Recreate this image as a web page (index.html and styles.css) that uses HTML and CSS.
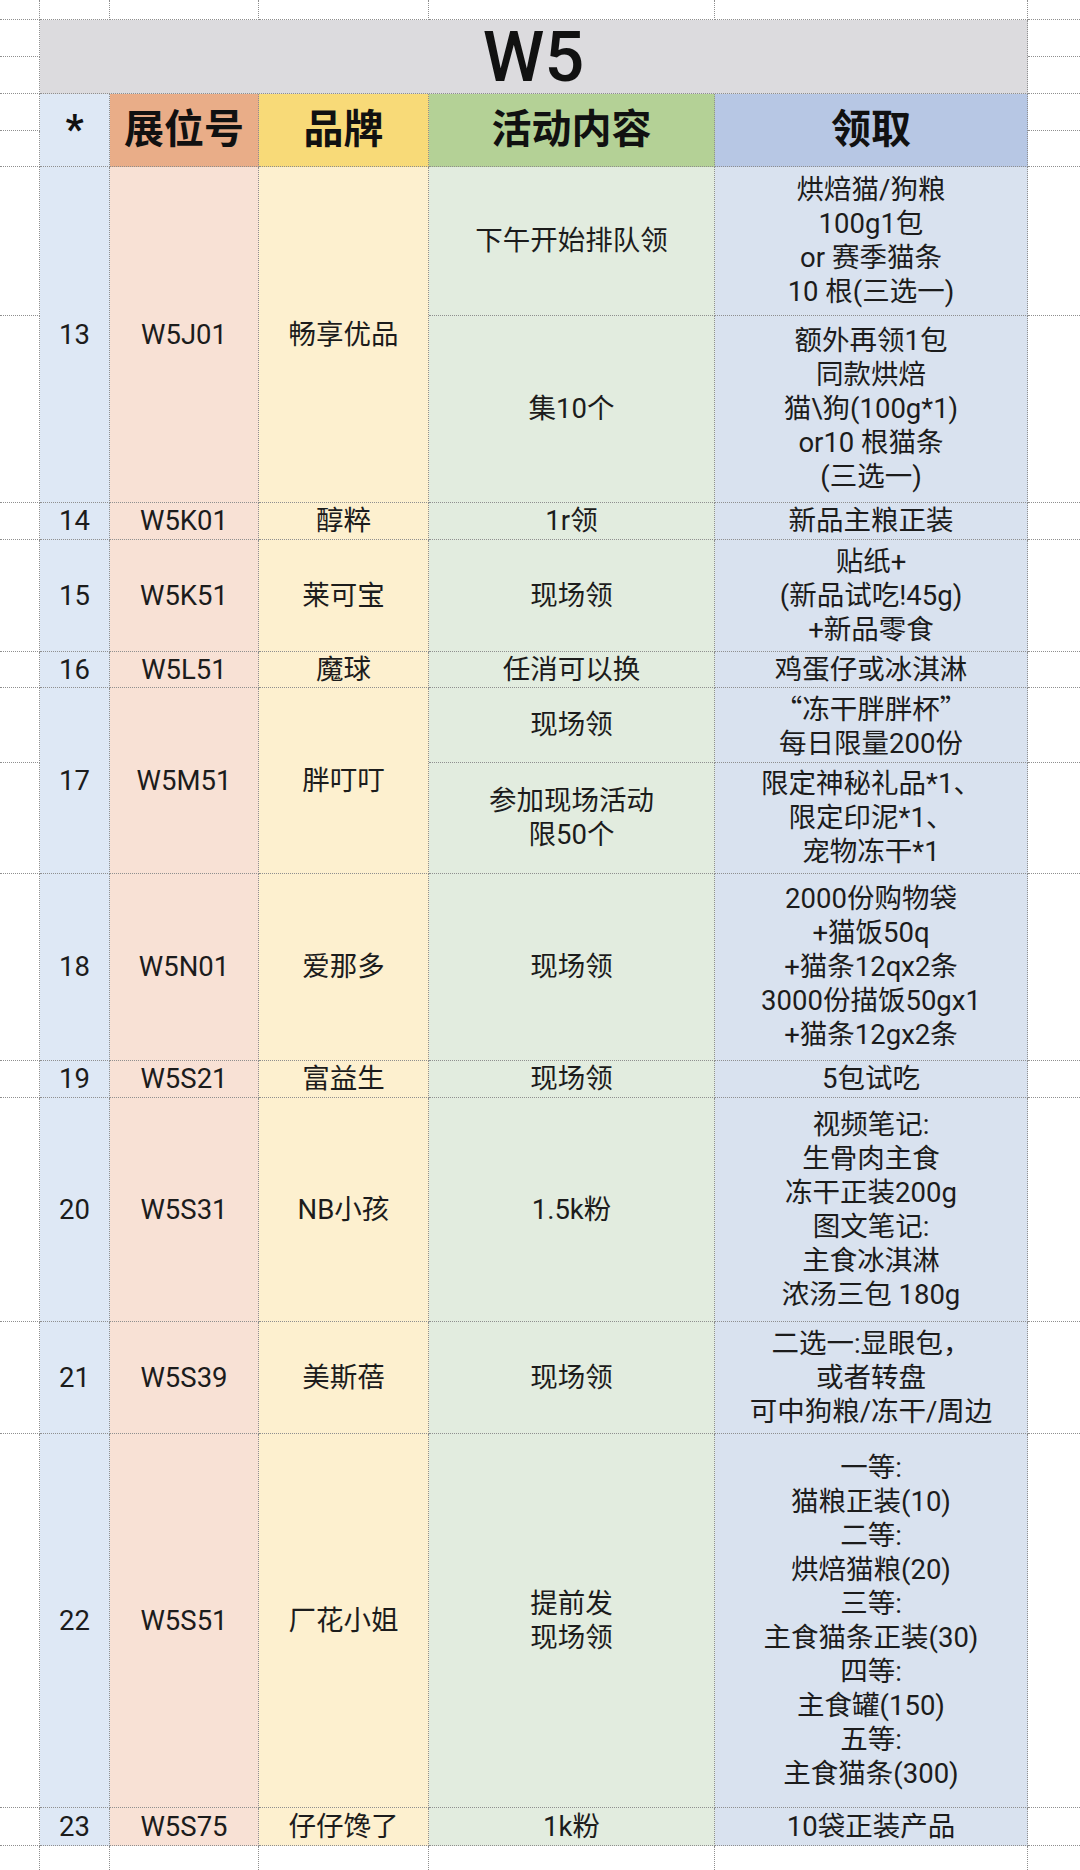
FILE: index.html
```html
<!DOCTYPE html>
<html lang="zh-CN">
<head>
<meta charset="utf-8">
<title>W5</title>
<link rel="stylesheet" href="styles.css">
</head>
<body>
<div class="sheet">
  <!-- top blank row -->
  <div class="c m"></div><div class="c"></div><div class="c"></div><div class="c"></div><div class="c"></div><div class="c"></div><div class="c m rt"></div>

  <!-- title -->
  <div class="c m"></div>
  <div class="c title s2">W5</div>
  <div class="c m rt"></div>
  <div class="c m"></div>
  <div class="c m rt"></div>

  <!-- header -->
  <div class="c m"></div>
  <div class="c h n s2">*</div>
  <div class="c h hb s2">展位号</div>
  <div class="c h hbr s2">品牌</div>
  <div class="c h ha s2">活动内容</div>
  <div class="c h hr s2">领取</div>
  <div class="c m rt"></div>
  <div class="c m"></div>
  <div class="c m rt"></div>

  <!-- 13 -->
  <div class="c m"></div>
  <div class="c n s2">13</div>
  <div class="c b s2">W5J01</div>
  <div class="c br s2">畅享优品</div>
  <div class="c a">下午开始排队领</div>
  <div class="c r">烘焙猫/狗粮<br>100g1包<br>or 赛季猫条<br>10 根(三选一)</div>
  <div class="c m rt"></div>
  <div class="c m"></div>
  <div class="c a">集10个</div>
  <div class="c r">额外再领1包<br>同款烘焙<br>猫\狗(100g*1)<br>or10 根猫条<br>(三选一)</div>
  <div class="c m rt"></div>

  <!-- 14 -->
  <div class="c m"></div>
  <div class="c n">14</div>
  <div class="c b">W5K01</div>
  <div class="c br">醇粹</div>
  <div class="c a">1r领</div>
  <div class="c r">新品主粮正装</div>
  <div class="c m rt"></div>

  <!-- 15 -->
  <div class="c m"></div>
  <div class="c n">15</div>
  <div class="c b">W5K51</div>
  <div class="c br">莱可宝</div>
  <div class="c a">现场领</div>
  <div class="c r">贴纸+<br>(新品试吃!45g)<br>+新品零食</div>
  <div class="c m rt"></div>

  <!-- 16 -->
  <div class="c m"></div>
  <div class="c n">16</div>
  <div class="c b">W5L51</div>
  <div class="c br">魔球</div>
  <div class="c a">任消可以换</div>
  <div class="c r">鸡蛋仔或冰淇淋</div>
  <div class="c m rt"></div>

  <!-- 17 -->
  <div class="c m"></div>
  <div class="c n s2">17</div>
  <div class="c b s2">W5M51</div>
  <div class="c br s2">胖叮叮</div>
  <div class="c a">现场领</div>
  <div class="c r"><div class="txt"><span class="q">“</span>冻干胖胖杯<span class="q">”</span><br>每日限量200份</div></div>
  <div class="c m rt"></div>
  <div class="c m"></div>
  <div class="c a">参加现场活动<br>限50个</div>
  <div class="c r">限定神秘礼品*1、<br>限定印泥*1、<br>宠物冻干*1</div>
  <div class="c m rt"></div>

  <!-- 18 -->
  <div class="c m"></div>
  <div class="c n">18</div>
  <div class="c b">W5N01</div>
  <div class="c br">爱那多</div>
  <div class="c a">现场领</div>
  <div class="c r">2000份购物袋<br>+猫饭50q<br>+猫条12qx2条<br>3000份描饭50gx1<br>+猫条12gx2条</div>
  <div class="c m rt"></div>

  <!-- 19 -->
  <div class="c m"></div>
  <div class="c n">19</div>
  <div class="c b">W5S21</div>
  <div class="c br">富益生</div>
  <div class="c a">现场领</div>
  <div class="c r">5包试吃</div>
  <div class="c m rt"></div>

  <!-- 20 -->
  <div class="c m"></div>
  <div class="c n">20</div>
  <div class="c b">W5S31</div>
  <div class="c br">NB小孩</div>
  <div class="c a">1.5k粉</div>
  <div class="c r">视频笔记:<br>生骨肉主食<br>冻干正装200g<br>图文笔记:<br>主食冰淇淋<br>浓汤三包 180g</div>
  <div class="c m rt"></div>

  <!-- 21 -->
  <div class="c m"></div>
  <div class="c n">21</div>
  <div class="c b">W5S39</div>
  <div class="c br">美斯蓓</div>
  <div class="c a">现场领</div>
  <div class="c r">二选一:显眼包，<br>或者转盘<br>可中狗粮/冻干/周边</div>
  <div class="c m rt"></div>

  <!-- 22 -->
  <div class="c m"></div>
  <div class="c n">22</div>
  <div class="c b">W5S51</div>
  <div class="c br">厂花小姐</div>
  <div class="c a">提前发<br>现场领</div>
  <div class="c r">一等:<br>猫粮正装(10)<br>二等:<br>烘焙猫粮(20)<br>三等:<br>主食猫条正装(30)<br>四等:<br>主食罐(150)<br>五等:<br>主食猫条(300)</div>
  <div class="c m rt"></div>

  <!-- 23 -->
  <div class="c m"></div>
  <div class="c n">23</div>
  <div class="c b">W5S75</div>
  <div class="c br">仔仔馋了</div>
  <div class="c a">1k粉</div>
  <div class="c r">10袋正装产品</div>
  <div class="c m rt"></div>

  <!-- bottom blank row -->
  <div class="c m last"></div><div class="c last"></div><div class="c last"></div><div class="c last"></div><div class="c last"></div><div class="c last"></div><div class="c m rt last"></div>
</div>
</body>
</html>
```

FILE: styles.css
```css
* {
  box-sizing: border-box;
}

html, body {
  margin: 0;
  padding: 0;
  background: #ffffff;
}

body {
  font-family: Roboto, "Noto Sans CJK SC", sans-serif;
  color: #1c1c1c;
}

.sheet {
  width: 1080px;
  height: 1870px;
  display: grid;
  grid-template-columns: 40px 70px 149px 170px 286px 313px 1fr;
  grid-template-rows:
    20px 37px 37px 37px 36px
    149px 187px 37px 112px 36px
    75px 111px 187px 37px 224px
    112px 374px 38px 1fr;
  overflow: hidden;
}

.c {
  border-right: 1px dotted #8f8f8f;
  border-bottom: 1px dotted #8f8f8f;
  display: flex;
  align-items: center;
  justify-content: center;
  text-align: center;
  font-size: 27.5px;
  line-height: 34px;
  white-space: nowrap;
  background: #ffffff;
}

.txt {
  text-align: center;
}

.q {
  font-family: "Noto Sans CJK SC", sans-serif;
}

.rt {
  border-right: none;
}

.last {
  border-bottom: none;
}

.s2 {
  grid-row: span 2;
}

.title {
  grid-column: span 5;
  background: #dcdbde;
  font-size: 70px;
  font-weight: 500;
  line-height: 1;
  color: #111111;
}

.h {
  font-size: 40px;
  font-weight: 700;
  line-height: 1;
  color: #111111;
}

.n { background: #dee8f5; }
.b { background: #f8e1d5; }
.br { background: #fdf0cf; }
.a { background: #e2ecdf; }
.r { background: #d9e2ef; }

.hb { background: #e9ad88; }
.hbr { background: #f8da78; }
.ha { background: #b4d196; }
.hr { background: #b7c7e4; }
```
